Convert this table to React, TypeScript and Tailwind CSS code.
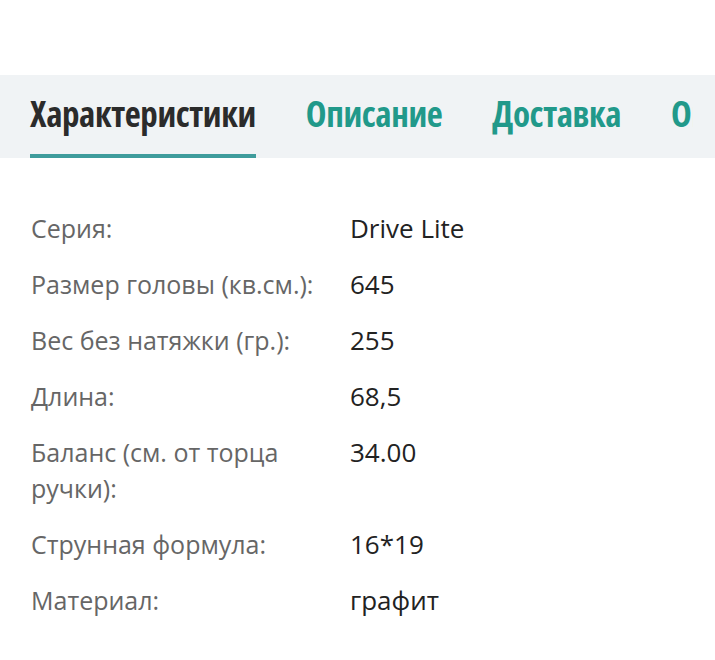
import React from 'react'

const tabs = ['Характеристики', 'Описание', 'Доставка', 'Оплата']

const specs: [string, string][] = [
  ['Серия:', 'Drive Lite'],
  ['Размер головы (кв.см.):', '645'],
  ['Вес без натяжки (гр.):', '255'],
  ['Длина:', '68,5'],
  ['Баланс (см. от торца ручки):', '34.00'],
  ['Струнная формула:', '16*19'],
  ['Материал:', 'графит'],
]

export default function App() {
  return (
    <div className="w-[715px] h-[660px] overflow-hidden bg-white font-['Open_Sans',sans-serif]">
      <div className="h-[75px]" />
      {/* табы, прокручиваются по горизонтали */}
      <div className="h-[83px] bg-[#f0f3f5]">
        <div className="w-[693px] h-full overflow-hidden flex gap-[50px] pl-[30px] whitespace-nowrap">
          {tabs.map((t, i) => (
            <div
              key={t}
              className={
                'shrink-0 text-[35px] leading-[77px] pb-[2px] font-bold [font-stretch:75%] tracking-[-0.4px] border-b-4 ' +
                (i === 0 ? 'text-[#2b2b2b] border-[#3f9c9c]' : 'text-[#21998a] border-transparent')
              }
            >
              {t}
            </div>
          ))}
        </div>
      </div>
      {/* характеристики */}
      <div className="pt-[52px] pl-[31px] flex flex-col gap-[20px] leading-[36px]">
        {specs.map(([k, v]) => (
          <div key={k} className="grid grid-cols-[319px_1fr]">
            <div className="text-[25px] text-[#666] pr-[10px]">{k}</div>
            <div className="text-[26px] text-[#222]">{v}</div>
          </div>
        ))}
      </div>
    </div>
  )
}
